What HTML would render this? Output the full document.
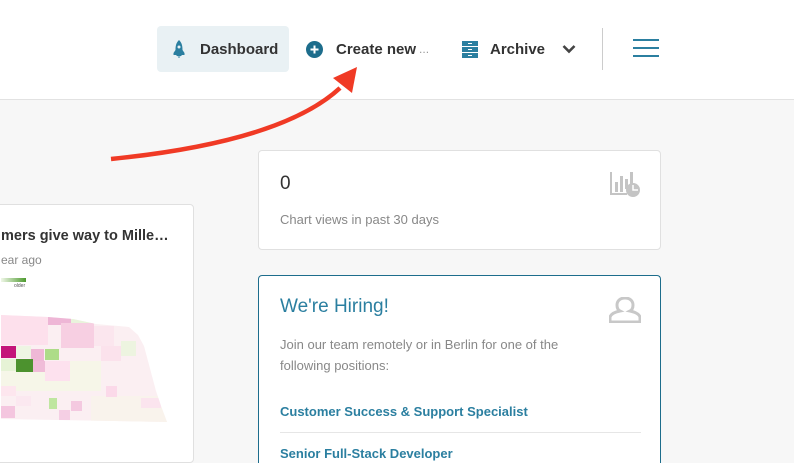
<!DOCTYPE html>
<html><head><meta charset="utf-8"><style>
*{box-sizing:border-box;margin:0;padding:0}
html,body{width:794px;height:463px;overflow:hidden}
body{font-family:"Liberation Sans",Arial,sans-serif;background:#f7f7f7;position:relative}
.hdr{position:absolute;left:0;top:0;width:794px;height:100px;background:#fff;border-bottom:1px solid #e2e2e2}
.nav{position:absolute;top:26px;height:46px;display:flex;align-items:center;font-size:15px;color:#333;font-weight:bold}
.card{position:absolute;background:#fff;border:1px solid #e0e0e0;border-radius:4px}
</style></head><body>
<div class="hdr"></div>
<div class="nav" style="left:157px;width:132px;background:#e9f1f4;border-radius:4px;padding-left:15px">
<svg width="14" height="18" viewBox="0 0 14 18"><path d="M7 0C4 3 3.5 6 3.5 10l-2 3v2h2.5l1 1h4l1-1h2.5v-2l-2-3C10.5 6 10 3 7 0z" fill="#2b7fa0"/><path d="M5.5 16.5L7 18l1.5-1.5z" fill="#2b7fa0"/><circle cx="7" cy="7" r="1.5" fill="#e9f1f4"/></svg>
<span style="margin-left:14px">Dashboard</span></div>
<div class="nav" style="left:306px">
<svg width="17" height="17"><circle cx="8.5" cy="8.5" r="8.5" fill="#1d6d8c"/><path d="M8.5 4.5v8M4.5 8.5h8" stroke="#fff" stroke-width="2"/></svg>
<span style="margin-left:13px">Create new </span><span style="color:#999;font-weight:normal;font-size:12px;margin-left:3px">...</span></div>
<div class="nav" style="left:462px">
<svg width="16" height="17"><rect x="0" y="0" width="16" height="5" fill="#2b7fa0"/><rect x="0" y="6" width="16" height="5" fill="#2b7fa0"/><rect x="0" y="12" width="16" height="5" fill="#2b7fa0"/><rect x="6" y="2" width="4" height="1" fill="#fff"/><rect x="6" y="8" width="4" height="1" fill="#fff"/><rect x="6" y="14" width="4" height="1" fill="#fff"/></svg>
<span style="margin-left:12px">Archive</span>
<svg style="margin-left:17px" width="14" height="10"><path d="M1.5 2l5.5 5.5L12.5 2" stroke="#444" stroke-width="2.6" fill="none"/></svg></div>
<div style="position:absolute;left:602px;top:28px;width:1px;height:42px;background:#ccc"></div>
<div style="position:absolute;left:633px;top:39px;width:26px;height:2px;background:#2b7fa0;box-shadow:0 8px 0 #2b7fa0,0 16px 0 #2b7fa0"></div>

<svg style="position:absolute;left:0;top:0" width="794" height="463">
<path d="M111 159 C220 148 300 125 340 88" stroke="#f03a25" stroke-width="4.5" fill="none"/>
<path d="M357 67 L333 78 L352 93 Z" fill="#f03a25"/>
</svg>

<div class="card" style="left:-10px;top:204px;width:204px;height:259px">
<div style="position:absolute;left:10px;top:23px;font-size:14.5px;font-weight:bold;color:#333">mers give way to Mille…</div>
<div style="position:absolute;left:10px;top:48px;font-size:12px;color:#888">ear ago</div>
<div style="position:absolute;left:10px;top:73px;width:25px;height:4px;background:linear-gradient(90deg,#f0f7e8,#4d9a2e)"></div>
<div style="position:absolute;left:23px;top:78px;font-size:5px;color:#555">older</div>
<svg style="position:absolute;left:10px;top:110px" width="180" height="115" viewBox="0 314 180 115">
<defs><clipPath id="c"><path d="M0 314 L47 316 L72 318 L95 323 L128 326 L137 334 L143 345 L147 360 L151 375 L155 390 L160 405 L166 421 L0 418Z"/></clipPath></defs>
<g clip-path="url(#c)">
<rect x="0" y="310" width="170" height="115" fill="#fbeff2"/>
<rect x="0" y="360" width="100" height="30" fill="#f6f6e8"/>
<rect x="90" y="395" width="80" height="30" fill="#f9f3ec"/>
<rect x="0" y="314" width="47" height="30" fill="#fde0ec"/>
<rect x="47" y="314" width="23" height="10" fill="#eeb6d6"/>
<rect x="70" y="318" width="23" height="8" fill="#e9f3dc"/>
<rect x="60" y="322" width="33" height="25" fill="#f7cfe2"/>
<rect x="93" y="325" width="20" height="20" fill="#fbe6ee"/>
<rect x="0" y="345" width="15" height="12" fill="#c4157a"/>
<rect x="15" y="345" width="15" height="12" fill="#eef5e3"/>
<rect x="30" y="348" width="13" height="12" fill="#efb8d6"/>
<rect x="44" y="348" width="14" height="11" fill="#addc88"/>
<rect x="15" y="358" width="17" height="13" fill="#4c922e"/>
<rect x="32" y="360" width="12" height="11" fill="#f0bcd8"/>
<rect x="44" y="360" width="25" height="20" fill="#fde1ee"/>
<rect x="0" y="358" width="15" height="12" fill="#e6f3d6"/>
<rect x="100" y="345" width="20" height="15" fill="#fbe2ec"/>
<rect x="120" y="340" width="15" height="15" fill="#edf4e0"/>
<rect x="105" y="385" width="11" height="11" fill="#fbd9e9"/>
<rect x="0" y="385" width="15" height="10" fill="#fde6ee"/>
<rect x="48" y="397" width="8" height="11" fill="#bfe6a0"/>
<rect x="70" y="400" width="11" height="10" fill="#f4c9e0"/>
<rect x="0" y="405" width="14" height="12" fill="#f4c6df"/>
<rect x="58" y="409" width="11" height="10" fill="#f5cfe4"/>
<rect x="140" y="397" width="20" height="10" fill="#fbe4ee"/>
<rect x="15" y="395" width="15" height="10" fill="#fbe8f0"/>
</g></svg>
</div>

<div class="card" style="left:258px;top:150px;width:403px;height:100px">
<div style="position:absolute;left:21px;top:22px;font-size:19px;color:#333">0</div>
<div style="position:absolute;left:21px;top:61px;font-size:13px;color:#888">Chart views in past 30 days</div>
<svg style="position:absolute;left:351px;top:19px" width="32" height="28"><path d="M1 2v22h16" stroke="#c4c4c4" stroke-width="2" fill="none"/><rect x="5" y="12" width="3" height="10" fill="#c4c4c4"/><rect x="10" y="6" width="3" height="16" fill="#c4c4c4"/><rect x="15" y="9" width="3" height="10" fill="#c4c4c4"/><rect x="20" y="2" width="3" height="12" fill="#c4c4c4"/><circle cx="23" cy="20" r="7" fill="#c4c4c4"/><path d="M23 15v5h5" stroke="#fff" stroke-width="1.5" fill="none"/></svg>
</div>

<div class="card" style="left:258px;top:275px;width:403px;height:188px;border-color:#1d6d8c;border-bottom:none;border-radius:4px 4px 0 0">
<div style="position:absolute;left:21px;top:20px;font-size:19px;color:#2b7fa0">We're Hiring!</div>
<div style="position:absolute;left:21px;top:58px;width:330px;font-size:13px;line-height:21px;color:#888">Join our team remotely or in Berlin for one of the following positions:</div>
<svg style="position:absolute;left:350px;top:21px" width="32" height="26"><path d="M16 1c-5 0-8 3-8 7 0 3 1 5 3 6-5 1-9 3-10 6v5h30v-5c-1-3-5-5-10-6 2-1 3-3 3-6 0-4-3-7-8-7z" fill="none" stroke="#c8c8c8" stroke-width="3"/></svg>
<div style="position:absolute;left:21px;top:128px;font-size:13px;font-weight:bold;color:#2b7fa0">Customer Success &amp; Support Specialist</div>
<div style="position:absolute;left:21px;top:156px;width:361px;height:1px;background:#e6e6e6"></div>
<div style="position:absolute;left:21px;top:170px;font-size:13px;font-weight:bold;color:#2b7fa0">Senior Full-Stack Developer</div>
</div>
</body></html>
